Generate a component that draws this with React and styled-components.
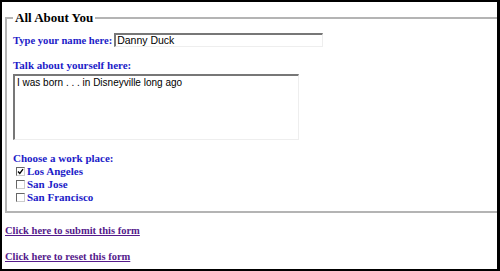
import React from "react";
import styled, { createGlobalStyle } from "styled-components";

const Global = createGlobalStyle`
  html, body { margin: 0; padding: 0; background: #fff; }
  body { font-family: "Liberation Serif", "Times New Roman", serif; }
`;

const Frame = styled.div`
  box-sizing: border-box;
  width: 500px;
  height: 271px;
  border: 2px solid #000;
  border-right-width: 3px;
  background: #fff;
  overflow: hidden;
  display: flex;
  flex-direction: column;
`;

const Fieldset = styled.fieldset`
  margin: 8px 0 0 3px;
  padding: 0 6px 7px 6px;
  border: 2px solid #b4b4b4;
  border-right: none;
  display: flex;
  flex-direction: column;
  min-width: 0;
`;

const Legend = styled.legend`
  font-size: 13px;
  font-weight: bold;
  color: #000;
  padding: 0 2px;
  margin-left: 0;
  line-height: 16px;
`;

const Label = styled.label`
  font-size: ${(p) => p.$size || 11}px;
  font-weight: bold;
  color: #1c1cc8;
  line-height: 13px;
`;

const NameRow = styled.div`
  display: flex;
  align-items: center;
  gap: 2px;
  margin-top: 7px;
`;

const TextInput = styled.div`
  box-sizing: border-box;
  width: 209px;
  height: 14px;
  border-top: 2px solid #777;
  border-left: 2px solid #777;
  border-right: 1px solid #eee;
  border-bottom: 1px solid #eee;
  font-family: "Liberation Sans", Arial, sans-serif;
  font-size: 10.5px;
  line-height: 11px;
  padding-left: 1px;
  color: #000;
`;

const Block = styled.div`
  display: flex;
  flex-direction: column;
  margin-top: ${(p) => p.$top}px;
`;

const TextArea = styled.div`
  box-sizing: border-box;
  width: 286px;
  height: 66px;
  margin-top: 2px;
  border-top: 2px solid #777;
  border-left: 2px solid #777;
  border-right: 1px solid #eee;
  border-bottom: 1px solid #eee;
  font-family: "Liberation Sans", Arial, sans-serif;
  font-size: 10px;
  line-height: 12px;
  padding: 1px 2px;
  color: #000;
`;

const CheckRow = styled.div`
  display: flex;
  align-items: center;
  gap: 2px;
  padding-left: 3px;
  height: 13px;
`;

const Box = styled.span`
  box-sizing: border-box;
  width: 9px;
  height: 9px;
  border-top: 1px solid #666;
  border-left: 1px solid #666;
  border-right: 1px solid #ccc;
  border-bottom: 1px solid #ccc;
  background: #fff;
  display: flex;
  align-items: center;
  justify-content: center;
`;

const Links = styled.div`
  display: flex;
  flex-direction: column;
  gap: 12px;
  padding: 11px 0 0 3px;
`;

const Link = styled.a`
  font-size: 10.5px;
  font-weight: bold;
  color: #551a8b;
  text-decoration: underline;
  line-height: 14px;
  align-self: flex-start;
`;

const places = [
  { name: "Los Angeles", checked: true },
  { name: "San Jose", checked: false },
  { name: "San Francisco", checked: false },
];

export default function App() {
  return (
    <>
      <Global />
      <Frame>
        <Fieldset>
          <Legend>All About You</Legend>
          <NameRow>
            <Label $size={10.6}>Type your name here:</Label>
            <TextInput>Danny Duck</TextInput>
          </NameRow>
          <Block $top={12}>
            <Label>Talk about yourself here:</Label>
            <TextArea>I was born . . . in Disneyville long ago</TextArea>
          </Block>
          <Block $top={12}>
            <Label>Choose a work place:</Label>
            {places.map((p) => (
              <CheckRow key={p.name}>
                <Box>
                  {p.checked && (
                    <svg width="7" height="7" viewBox="0 0 7 7">
                      <path d="M1 3.5 L2.8 5.5 L6 1.2" stroke="#000" strokeWidth="1.3" fill="none" />
                    </svg>
                  )}
                </Box>
                <Label>{p.name}</Label>
              </CheckRow>
            ))}
          </Block>
        </Fieldset>
        <Links>
          <Link href="#">Click here to submit this form</Link>
          <Link href="#">Click here to reset this form</Link>
        </Links>
      </Frame>
    </>
  );
}
